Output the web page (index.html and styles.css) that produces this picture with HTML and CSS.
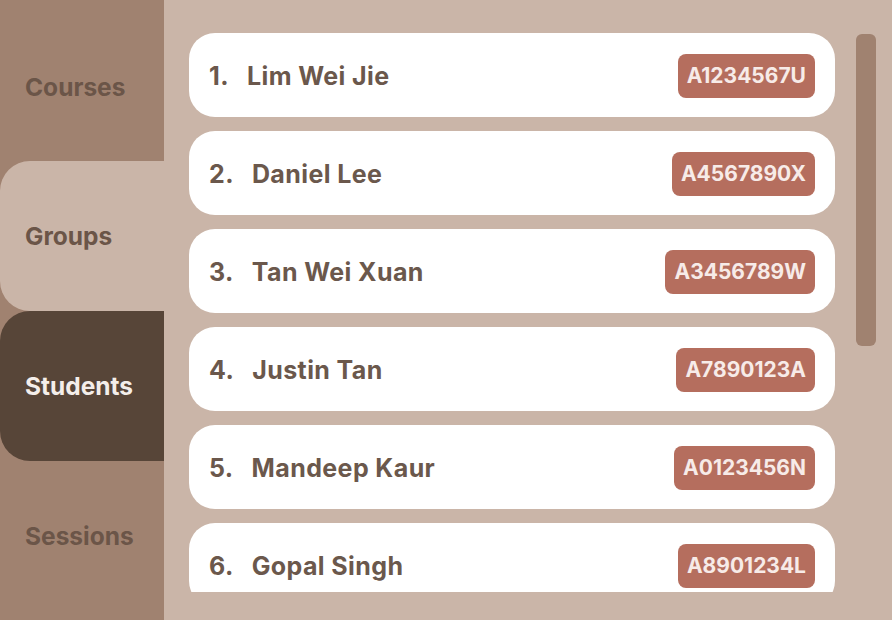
FILE: index.html
```html
<!DOCTYPE html>
<html lang="en">
<head>
<meta charset="utf-8">
<title>Students</title>
<link rel="stylesheet" href="styles.css">
</head>
<body>
<div class="app">
  <nav class="sidebar">
    <a class="nav-item">Courses</a>
    <a class="nav-item nav-item--hover">Groups</a>
    <a class="nav-item nav-item--active">Students</a>
    <a class="nav-item">Sessions</a>
  </nav>
  <main class="main">
    <ul class="student-list">
      <li class="student"><span class="student__num">1.</span><span class="student__name">Lim Wei Jie</span><span class="student__id">A1234567U</span></li>
      <li class="student"><span class="student__num">2.</span><span class="student__name">Daniel Lee</span><span class="student__id">A4567890X</span></li>
      <li class="student"><span class="student__num">3.</span><span class="student__name">Tan Wei Xuan</span><span class="student__id">A3456789W</span></li>
      <li class="student"><span class="student__num">4.</span><span class="student__name">Justin Tan</span><span class="student__id">A7890123A</span></li>
      <li class="student"><span class="student__num">5.</span><span class="student__name">Mandeep Kaur</span><span class="student__id">A0123456N</span></li>
      <li class="student"><span class="student__num">6.</span><span class="student__name">Gopal Singh</span><span class="student__id">A8901234L</span></li>
    </ul>
    <div class="scrollbar"><div class="scrollbar__thumb"></div></div>
  </main>
</div>
</body>
</html>
```
FILE: styles.css
```css
* { box-sizing: border-box; }
html, body {
  margin: 0;
  height: 100%;
}
body {
  font-family: "Inter", "Liberation Sans", sans-serif;
  font-weight: 700;
  background: #cab5a8;
}
.app {
  display: flex;
  height: 620px;
}
.sidebar {
  width: 164px;
  flex: none;
  background: #a08270;
  padding-top: 12px;
  display: flex;
  flex-direction: column;
}
.nav-item {
  height: 150px;
  flex: none;
  display: flex;
  align-items: center;
  padding-left: 25px;
  font-size: 24.5px;
  color: #6b5548;
  cursor: pointer;
}
.nav-item--hover {
  background: #cab5a8;
  border-radius: 30px 0 0 30px;
  margin-top: -1px;
}
.nav-item--active {
  background: #574538;
  color: #f4eeea;
  border-radius: 30px 0 0 30px;
}
.main {
  flex: 1;
  padding: 33px 16px 28px 25px;
  display: flex;
  gap: 21px;
  min-width: 0;
}
.student-list {
  list-style: none;
  margin: 0;
  padding: 0;
  flex: 1;
  overflow: hidden;
  display: flex;
  flex-direction: column;
  gap: 14px;
}
.scrollbar {
  width: 20px;
  flex: none;
  padding-top: 1px;
}
.scrollbar__thumb {
  height: 312px;
  background: #a08270;
  border-radius: 6px;
}
.student {
  flex: none;
  height: 84px;
  background: #fff;
  border-radius: 26px;
  display: flex;
  align-items: center;
  padding: 1px 20px 0;
  color: #6b584c;
  font-size: 25px;
  letter-spacing: 0.4px;
}
.student__num {
  margin-right: 18px;
}
.student__name {
  flex: 1;
}
.student__id {
  background: #b56e5e;
  color: #f7ebe8;
  border-radius: 8px;
  height: 44px;
  display: flex;
  align-items: center;
  padding: 0 9px;
  font-size: 21px;
  letter-spacing: 0;
}
```
